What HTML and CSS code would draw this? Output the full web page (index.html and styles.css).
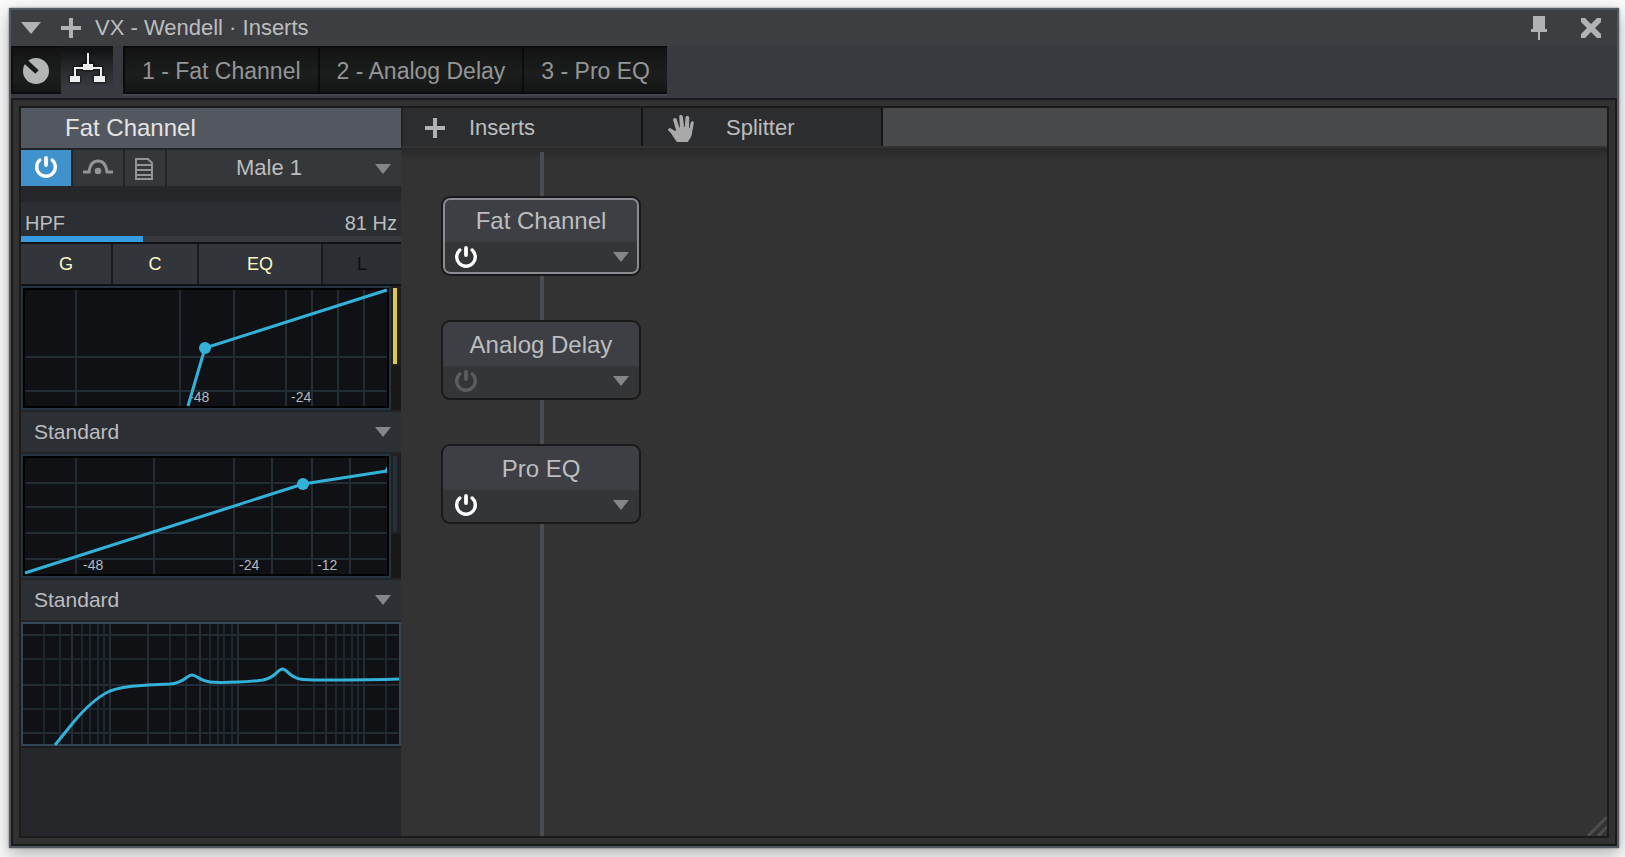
FILE: index.html
```html
<!DOCTYPE html>
<html lang="en">
<head>
<meta charset="utf-8">
<title>VX - Wendell · Inserts</title>
<link rel="stylesheet" href="styles.css">
</head>
<body>
<svg class="defs" aria-hidden="true">
  <symbol id="power" viewBox="0 0 24 22"><path d="M5.800 4A9.300 9.300 0 1 0 18.200 4" fill="none" stroke="currentColor" stroke-width="3.400" stroke-linecap="round"/><path d="M12 2v7" stroke="currentColor" stroke-width="3.800" stroke-linecap="round"/></symbol>
  <symbol id="arrow" viewBox="0 0 16 10"><path d="M0 0h16l-8 10z" fill="currentColor"/></symbol>
  <symbol id="plus" viewBox="0 0 20 20"><path d="M8 0h4v8h8v4h-8v8H8v-8H0V8h8z" fill="currentColor"/></symbol>
</svg>
<main class="window">
  <header class="titlebar">
    <button class="icon-btn" aria-label="Menu"><svg class="menu-arrow" viewBox="0 0 20 12"><path d="M0 0h20L10 12z" fill="currentColor"/></svg></button>
    <button class="icon-btn add" aria-label="Add insert"><svg class="plus"><use href="#plus"/></svg></button>
    <h1 class="title">VX - Wendell · Inserts</h1>
    <button class="icon-btn" aria-label="Pin window"><svg class="pin" viewBox="0 0 16 24"><path d="M2 0h12v13h2v3H9v8H7v-8H0v-3h2z" fill="currentColor"/></svg></button>
    <button class="icon-btn close" aria-label="Close"><svg class="plus" viewBox="0 0 20 20"><path d="M0 0h4l6 6 6-6h4v4l-6 6 6 6v4h-4l-6-6-6 6H0v-4l6-6-6-6z" fill="currentColor"/></svg></button>
  </header>

  <nav class="tabbar">
    <button class="mode" aria-label="Controls"><svg class="knob" viewBox="0 0 26 26"><circle cx="13" cy="13" r="13" fill="#b4b6b6"/><path d="M1 2l13 12" stroke="#191a1a" stroke-width="5"/></svg></button>
    <button class="mode mode-on" aria-label="Routing"><svg class="tree" viewBox="-2 -2 40 34">
      <path d="M18 0v12M5 24v-9h26v9M13 11h10v5H13zM1 24h8v4H1zM25 24h9v4h-9z" fill="none" stroke="#000" stroke-opacity=".35" stroke-width="5" stroke-linejoin="round"/>
      <path d="M18 0v12M5 24v-9h26v9" fill="none" stroke="#eee" stroke-width="2"/><path d="M13 11h10v6H13zM0 23h10v6H0zM24 23h11v6H24z" fill="#eee"/></svg></button>
    <div class="tabs">
      <button class="tab">1 - Fat Channel</button>
      <button class="tab">2 - Analog Delay</button>
      <button class="tab">3 - Pro EQ</button>
    </div>
  </nav>

  <div class="frame">
    <div class="content">
      <aside class="panel">
        <h2 class="panel-title">Fat Channel</h2>
        <div class="tools">
          <button class="tool tool-power" aria-label="Power"><svg class="power"><use href="#power"/></svg></button>
          <button class="tool" aria-label="Bypass"><svg class="bypass" viewBox="0 0 30 16"><path d="M0 13h6c1-8 5-11 9-11s8 3 9 11h6" fill="none" stroke="currentColor" stroke-width="3"/><circle cx="15" cy="12" r="3.300" fill="currentColor"/></svg></button>
          <button class="tool tool-doc" aria-label="Presets"><svg class="doc" viewBox="0 0 18 22"><path d="M1 1h12l4 4v16H1zM1 7h16M1 12h16M1 17h16" fill="none" stroke="currentColor" stroke-width="2"/></svg></button>
          <div class="drop preset">
            <select class="drop-select" aria-label="Preset"><option>Male 1</option></select>
            <svg class="arrow"><use href="#arrow"/></svg>
          </div>
        </div>
        <div class="hpf">
          <label class="hpf-name" for="hpf">HPF</label>
          <output class="hpf-value" for="hpf">81 Hz</output>
        </div>
        <input class="slider" id="hpf" type="range" min="0" max="380" value="122">
        <div class="sections">
          <button class="section">G</button>
          <button class="section">C</button>
          <button class="section">EQ</button>
          <button class="section section-off">L</button>
        </div>

        <div class="graph-row">
          <svg class="graph" viewBox="0 0 370 124" role="img" aria-label="Gate curve">
            <path class="box" d="M1 1h368v122H1z"/><path class="inner" d="M3 3h364v118H3z"/>
            <path class="grid" d="M55 4v116M159 4v116M213 4v116M265 4v116M291 4v116M317 4v116M343 4v116M4 71h362M4 105h362"/>
            <text class="mark" x="168" y="116">-48</text><text class="mark" x="270" y="116">-24</text>
            <path class="curve" d="M167 120L184 62L366 4"/><circle class="dot" cx="184" cy="62" r="6"/>
          </svg>
          <div class="meter"><div class="meter-bar meter-gate"></div></div>
        </div>
        <div class="drop model">
          <select class="drop-select" aria-label="Gate model"><option>Standard</option></select>
          <svg class="arrow"><use href="#arrow"/></svg>
        </div>

        <div class="graph-row">
          <svg class="graph" viewBox="0 0 370 124" role="img" aria-label="Compressor curve">
            <path class="box" d="M1 1h368v122H1z"/><path class="inner" d="M3 3h364v118H3z"/>
            <path class="grid" d="M55 4v116M133 4v116M213 4v116M251 4v116M291 4v116M329 4v116M4 29h362M4 53h362M4 79h362M4 105h362"/>
            <text class="mark" x="62" y="116">-48</text><text class="mark" x="218" y="116">-24</text><text class="mark" x="296" y="116">-12</text>
            <path class="curve" d="M4 119L282 30L366 17"/><circle class="dot" cx="282" cy="30" r="6"/><path class="dot" d="M366 12v8l-2-4z"/>
          </svg>
          <div class="meter"><div class="meter-bar"></div></div>
        </div>
        <div class="drop model">
          <select class="drop-select" aria-label="Compressor model"><option>Standard</option></select>
          <svg class="arrow"><use href="#arrow"/></svg>
        </div>

        <svg class="eq" viewBox="0 0 380 124" role="img" aria-label="EQ curve">
          <path class="box" d="M1 1h378v122H1z"/>
          <path class="grid faint" d="M23 2v120M39 2v120M61 2v120M69 2v120M77 2v120M83 2v120M149 2v120M165 2v120M189 2v120M197 2v120M203 2v120M211 2v120M277 2v120M293 2v120M315 2v120M323 2v120M331 2v120M337 2v120M365 2v120M2 37h376M2 87h376"/>
          <path class="grid" d="M51 2v120M89 2v120M127 2v120M179 2v120M217 2v120M255 2v120M305 2v120M343 2v120M2 13h376M2 63h376M2 111h376"/>
          <path class="box-line" d="M1 1h378v122H1z"/>
          <path class="eq-curve" d="M34 123L51 102C64 86 76 75 89 69C101 64 113 64 127 63L149 62C163 61 166 53 171 53C176 53 178 59 189 60C199 61 207 60 217 60C228 60 233 59 242 58C255 56 256 47 262 47C267 48 268 55 279 57C284 58 294 58 302 58C328 58 353 58 378 57"/>
        </svg>
      </aside>

      <section class="routing">
        <div class="actions">
          <button class="action"><svg class="plus"><use href="#plus"/></svg><span>Inserts</span></button>
          <button class="action"><svg class="hand" viewBox="0 0 26 27"><path d="M9 27h11c1-3 4-5 4-9L25.800 8c.2-2.500-2.800-2.500-3.200 0l-1 5h-.6L21.200 3c0-3-3.600-3-3.800 0l-.6 9h-.6L14.800 1.500c-.4-2.300-3.800-2-3.600.4L12 12.500h-.6L8.800 4.500C7.800 2 4.600 3 5.200 5.500L8 15c0 1-.8 1.400-1.800.6L3 13.500c-2-1.200-4 1-2.200 2.500C4 18.500 6 23.500 9 27z" fill="currentColor"/></svg><span>Splitter</span></button>
          <div class="actions-rest"></div>
        </div>
        <div class="canvas">
          <article class="node node-selected">
            <h3 class="node-title">Fat Channel</h3>
            <div class="node-foot"><button class="icon-btn node-power" aria-label="Fat Channel power"><svg class="power"><use href="#power"/></svg></button><button class="icon-btn node-menu" aria-label="Fat Channel menu"><svg class="arrow"><use href="#arrow"/></svg></button></div>
          </article>
          <article class="node">
            <h3 class="node-title">Analog Delay</h3>
            <div class="node-foot"><button class="icon-btn node-power node-power-off" aria-label="Analog Delay power"><svg class="power"><use href="#power"/></svg></button><button class="icon-btn node-menu" aria-label="Analog Delay menu"><svg class="arrow"><use href="#arrow"/></svg></button></div>
          </article>
          <article class="node">
            <h3 class="node-title">Pro EQ</h3>
            <div class="node-foot"><button class="icon-btn node-power" aria-label="Pro EQ power"><svg class="power"><use href="#power"/></svg></button><button class="icon-btn node-menu" aria-label="Pro EQ menu"><svg class="arrow"><use href="#arrow"/></svg></button></div>
          </article>
          <svg class="grip" viewBox="0 0 20 20" aria-hidden="true"><path d="M1 20L20 1M11 20l9-9" stroke="#4d4e4f" stroke-width="3"/></svg>
        </div>
      </section>
    </div>
  </div>
</main>
</body>
</html>
```

FILE: styles.css
```css
* { box-sizing: border-box; }

body {
  margin: 0;
  padding: 8px 6px 9px 9px;
  min-height: 100vh;
  display: flex;
  background: #fafafa;
  font-family: "Liberation Sans", Arial, sans-serif;
  font-size: 22px;
  color: #bcbdbe;
}

button, select, input {
  margin: 0;
  padding: 0;
  border: 0;
  border-radius: 0;
  background: none;
  color: inherit;
  font: inherit;
}

h1, h2, h3 { margin: 0; font-weight: 400; }
svg { display: block; flex: none; }

.defs { position: absolute; width: 0; height: 0; }
.plus { width: 20px; height: 20px; }
.arrow { width: 16px; height: 10px; color: #858687; }
.power { width: 24px; height: 22px; }

.window {
  flex: 1;
  min-width: 0;
  display: flex;
  flex-direction: column;
  border: 2px solid #52585f;
  background: #373a3e;
  box-shadow: 0 0 2px rgba(0, 0, 0, .5), 0 6px 16px rgba(0, 0, 0, .3);
}

.titlebar {
  display: flex;
  align-items: center;
  height: 36px;
  padding: 0 16px 0 10px;
  background: #3d3e42;
}
.icon-btn { display: flex; color: #b1b2b3; }
.menu-arrow { width: 20px; height: 12px; }
.add { margin-left: 20px; }
.title { flex: 1; margin-left: 14px; font-size: 22px; line-height: 32px; }
.pin { width: 16px; height: 24px; }
.close { margin-left: 34px; }

.tabbar { display: flex; height: 52px; }
.mode {
  display: flex;
  align-items: center;
  justify-content: center;
  width: 50px;
  height: 48px;
  padding: 2px 2px 0 0;
  border: 2px solid #0d0d0d;
  border-right: 0;
  background: linear-gradient(#131313, #1d1f1f 60%, #151515);
}
.mode-on {
  width: 52px;
  height: 52px;
  border: 0;
  padding: 0 0 8px 2px;
  background: linear-gradient(#0e0f10, #25282b 40%, #373a3e 80%);
}
.knob { width: 26px; height: 26px; }
.tree { width: 40px; height: 34px; }
.tabs {
  display: flex;
  height: 50px;
  margin-left: 10px;
  border-bottom: 2px solid #42464c;
}
.tab {
  padding: 2px 17px 0;
  border: 2px solid #0b0b0b;
  border-right: 0;
  background: linear-gradient(#131313, #1c1e1e 60%, #131313);
  color: #949597;
  font-size: 23px;
}

.frame {
  flex: 1;
  display: flex;
  padding: 6px;
  border: 2px solid #1a1a1a;
  background: #313131;
}
.content {
  flex: 1;
  min-width: 0;
  display: flex;
  border: 2px solid #1b1b1c;
}

.panel {
  flex: none;
  width: 380px;
  background: #26272b;
}
.panel-title {
  height: 40px;
  padding-left: 44px;
  background: #53575f;
  color: #e4e4e4;
  font-size: 24px;
  line-height: 40px;
}
.tools {
  display: flex;
  gap: 2px;
  height: 38px;
  border-top: 2px solid #222326;
  background: #242528;
}
.tool {
  display: flex;
  align-items: center;
  justify-content: center;
  width: 50px;
  padding-bottom: 3px;
  background: #35383b;
  color: #929495;
}
.tool-power { background: #3f92cb; color: #fff; }
.tool-doc { width: 40px; padding: 2px 2px 0 0; }
.bypass { width: 30px; height: 16px; }
.doc { width: 18px; height: 22px; }

.drop { display: grid; align-items: center; }
.drop > * { grid-area: 1 / 1; }
.drop .arrow { justify-self: end; margin-right: 10px; pointer-events: none; }
.drop-select { width: 100%; height: 100%; padding: 0 0 2px 13px; appearance: none; }
.preset { flex: 1; background: #35383b; }
.preset .drop-select { padding: 0 30px 2px 0; text-align-last: center; }
.preset .arrow { margin-top: 2px; }
.model {
  height: 44px;
  border: solid #232426;
  border-width: 2px 0;
  background: #2c2f33;
  font-size: 21px;
}

.hpf {
  display: flex;
  justify-content: space-between;
  height: 34px;
  margin-top: 16px;
  padding: 4px 4px 0;
  background: #2b2e32;
  font-size: 20px;
  line-height: 34px;
}
.slider {
  display: block;
  width: 100%;
  height: 6px;
  appearance: none;
  overflow: hidden;
  background: #35393c;
}
.slider::-webkit-slider-thumb {
  appearance: none;
  width: 0;
  height: 6px;
  box-shadow: -400px 0 0 400px #359ce2;
}

.sections {
  display: grid;
  grid-template-columns: 90fr 84fr 122fr 78fr;
  gap: 2px;
  height: 44px;
  border: solid #111214;
  border-width: 2px 0;
  background: #191a1c;
  font-size: 18px;
}
.section { background: #323539; color: #fdf8c8; }
.section-off { background: #2b2e32; color: #0d0e10; }

.graph-row { display: flex; background: #181818; }
.graph { flex: 1; min-width: 0; }
.meter { width: 10px; height: 80px; padding: 2px; background: #202021; }
.meter-bar { width: 4px; height: 76px; background: #22303a; }
.meter-gate { background: #e2c94c; }
.eq {
  width: 100%;
  box-sizing: content-box;
  border-bottom: 2px solid #1c1d20;
}

.box { fill: #101115; stroke: #263440; stroke-width: 2; }
.box-line { fill: none; stroke: #324756; stroke-width: 2; }
.inner { fill: none; stroke: #000; stroke-width: 2; }
.grid { fill: none; stroke: #212c34; stroke-width: 2; }
.faint { stroke: #1c262e; }
.curve { fill: none; stroke: #33b2d9; stroke-width: 3; }
.eq-curve { fill: none; stroke: #33b2d9; stroke-width: 3; }
.dot { fill: #33b2d9; }
.mark { fill: #b2bbbf; font-size: 14px; }

.routing { flex: 1; min-width: 0; display: flex; flex-direction: column; }
.actions {
  display: flex;
  height: 40px;
  border-left: 2px solid #202122;
  border-bottom: 2px solid #323334;
}
.action {
  display: flex;
  align-items: center;
  gap: 24px;
  width: 240px;
  padding: 2px 0 0 22px;
  border-right: 2px solid #151515;
  background: #2c2d2f;
  font-size: 22px;
}
.action + .action { gap: 32px; padding-left: 25px; }
.action .plus { color: #b1b2b3; }
.hand { width: 26px; height: 27px; color: #a9a9a9; }
.actions-rest { flex: 1; background: #47494b; }

.canvas {
  position: relative;
  flex: 1;
  display: flex;
  flex-direction: column;
  gap: 44px;
  padding: 48px 40px;
  background: linear-gradient(#282828, #333 12px);
}
.canvas::before {
  content: "";
  position: absolute;
  left: 139px;
  top: 4px;
  bottom: 0;
  width: 4px;
  background: #494e52;
}
.node {
  position: relative;
  width: 200px;
  height: 80px;
  overflow: hidden;
  border: 2px solid #191919;
  border-radius: 9px;
  background: #343537;
}
.node-selected::after {
  content: "";
  position: absolute;
  inset: 0;
  border: 2px solid #8b8c91;
  border-radius: 7px;
  pointer-events: none;
}
.node-title {
  height: 44px;
  background: #3e3f45;
  font-size: 24px;
  line-height: 46px;
  text-align: center;
}
.node-foot {
  display: flex;
  align-items: center;
  justify-content: space-between;
  height: 30px;
  padding: 0 10px 0 11px;
}
.node-power { color: #fff; }
.node-power-off { color: #5c5d5f; }
.grip { position: absolute; right: 0; bottom: 0; width: 20px; height: 20px; }
```
